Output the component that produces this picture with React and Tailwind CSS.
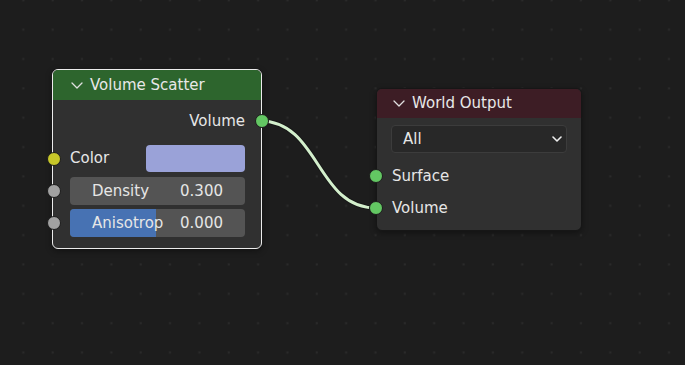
import React from 'react';

const Socket = ({ color, side }) => (
    <span
        className={`absolute top-1/2 -translate-y-1/2 w-[14px] h-[14px] rounded-full border border-[#1c1c1c] ${color} ${side}`}
    />
);

const Chevron = ({ className }) => (
    <svg className={className} width="12" height="7" viewBox="0 0 12 7" fill="none">
        <path d="M1 1 L6 6 L11 1" stroke="#e0e0e0" strokeWidth="1.3" strokeLinecap="round" strokeLinejoin="round" />
    </svg>
);

const NumberField = ({ label, value, fill }) => (
    <div className="relative h-[28px] rounded-[4px] bg-[#545454] overflow-hidden">
        {fill && <div className="absolute left-0 top-0 bottom-0 w-[86px] bg-[#4772b3]" />}
        <div className="relative h-full flex items-center justify-between px-[22px] text-[#e6e6e6]">
            <span>{label}</span>
            <span>{value}</span>
        </div>
    </div>
);

const App = () => {
    return (
        <div className="relative w-[685px] h-[365px] overflow-hidden bg-[#1d1d1d] font-['DejaVu_Sans',sans-serif] text-[15px] leading-none">
            {/* grid dots */}
            <svg className="absolute inset-0" width="685" height="365">
                <defs>
                    <pattern id="dots" x="0" y="-1" width="29.35" height="29.35" patternUnits="userSpaceOnUse">
                        <rect x="22.3" y="0.3" width="2" height="2" fill="#2b2b2b" />
                    </pattern>
                </defs>
                <rect width="685" height="365" fill="url(#dots)" />
            </svg>

            {/* link */}
            <svg className="absolute inset-0" width="685" height="365" fill="none">
                <path d="M260 121 C 320 121, 316 208, 376 208" stroke="#141414" strokeWidth="5" strokeOpacity="0.7" />
                <path d="M260 121 C 320 121, 316 208, 376 208" stroke="#d3efcc" strokeWidth="3" />
            </svg>

            {/* Volume Scatter node */}
            <div className="absolute left-[52px] top-[69px] w-[210px] rounded-[6px] border border-[#ececec] bg-[#303030] pb-[11px] shadow-[0_2px_6px_rgba(0,0,0,0.4)]">
                <div className="h-[30px] rounded-t-[5px] bg-[#2d652d] flex items-center pl-[18px] text-[#e8e8e8]">
                    <Chevron className="mr-[7px]" />
                    <span>Volume Scatter</span>
                </div>
                <div className="pl-[17px] pr-[16px]">
                    <div className="relative mt-[9px] h-[24px] flex items-center justify-end text-[#e6e6e6]">
                        <span>Volume</span>
                        <Socket color="bg-[#63c763]" side="right-[-24px]" />
                    </div>
                    <div className="relative mt-[12px] h-[27px] flex items-center justify-between text-[#e6e6e6]">
                        <span>Color</span>
                        <div className="w-[99px] h-full rounded-[4px] bg-[#9aa2d8]" />
                        <Socket color="bg-[#c7c729]" side="left-[-23px]" />
                    </div>
                    <div className="relative mt-[5px]">
                        <NumberField label="Density" value="0.300" />
                        <Socket color="bg-[#a1a1a1]" side="left-[-23px]" />
                    </div>
                    <div className="relative mt-[4px]">
                        <NumberField label="Anisotrop" value="0.000" fill />
                        <Socket color="bg-[#a1a1a1]" side="left-[-23px]" />
                    </div>
                </div>
            </div>

            {/* World Output node */}
            <div className="absolute left-[376px] top-[88px] w-[206px] rounded-[6px] border border-[#161616] bg-[#303030] pb-[10px] shadow-[0_2px_6px_rgba(0,0,0,0.4)]">
                <div className="h-[29px] rounded-t-[5px] bg-[#3d1d25] flex items-center pl-[16px] text-[#e8e8e8]">
                    <Chevron className="mr-[7px]" />
                    <span>World Output</span>
                </div>
                <div className="px-[14px]">
                    <div className="mt-[7px] h-[28px] rounded-[4px] bg-[#282828] border border-[#3c3c3c] flex items-center justify-between pl-[11px] pr-[4px] text-[#e6e6e6]">
                        <span>All</span>
                        <svg width="10" height="6" viewBox="0 0 10 6" fill="none">
                            <path d="M1 1 L5 5 L9 1" stroke="#eeeeee" strokeWidth="1.6" strokeLinecap="round" strokeLinejoin="round" />
                        </svg>
                    </div>
                    <div className="relative mt-[11px] h-[24px] flex items-center text-[#e6e6e6] pl-[1px]">
                        <span>Surface</span>
                        <Socket color="bg-[#63c763]" side="left-[-22px]" />
                    </div>
                    <div className="relative mt-[8px] h-[24px] flex items-center text-[#e6e6e6] pl-[1px]">
                        <span>Volume</span>
                        <Socket color="bg-[#63c763]" side="left-[-22px]" />
                    </div>
                </div>
            </div>
        </div>
    );
};

export default App;
